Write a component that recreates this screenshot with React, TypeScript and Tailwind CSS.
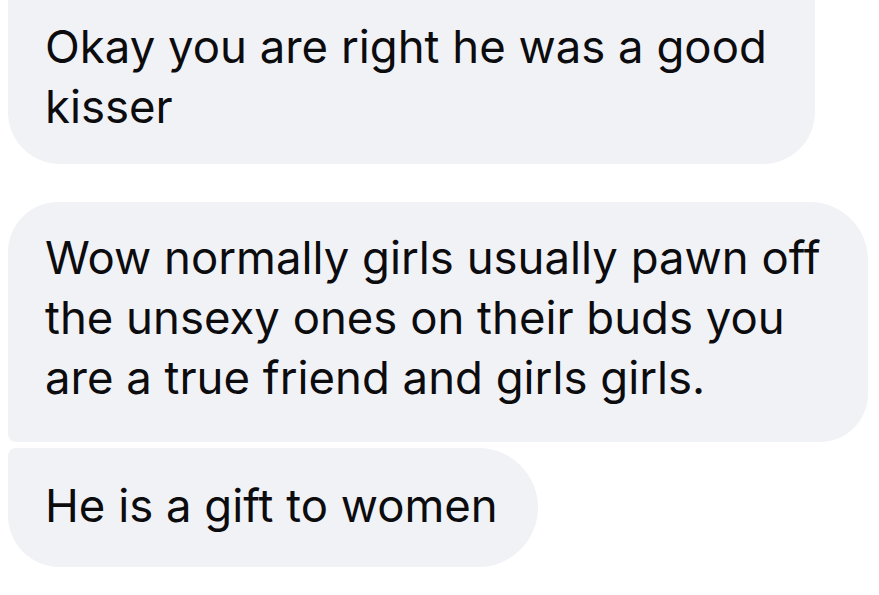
const bubble = 'bg-[#f1f2f6] pl-[37px] text-[45.5px] leading-[60px] text-[#0c0c0e] whitespace-nowrap';

export default function App() {
  return (
    <div
      className="h-[595px] w-[879px] overflow-hidden bg-white pl-2"
      style={{ fontFamily: 'Inter, "Noto Sans", sans-serif' }}
    >
      <div className={`${bubble} -mt-2 w-[807px] rounded-b-[52px] pt-[25px] pb-[27px]`}>
        <p>Okay you are right he was a good</p>
        <p>kisser</p>
      </div>

      <div
        className={`${bubble} mt-[38px] w-[860px] rounded-tl-[50px] rounded-tr-[58px] rounded-br-[48px] rounded-bl-[8px] pt-[26px] pb-[34px]`}
      >
        <p>Wow normally girls usually pawn off</p>
        <p>the unsexy ones on their buds you</p>
        <p>are a true friend and girls girls.</p>
      </div>

      <div
        className={`${bubble} mt-[6px] w-[530px] rounded-tl-[8px] rounded-bl-[52px] rounded-r-[60px] pt-[28px] pb-[31px]`}
      >
        <p>He is a gift to women</p>
      </div>
    </div>
  );
}
